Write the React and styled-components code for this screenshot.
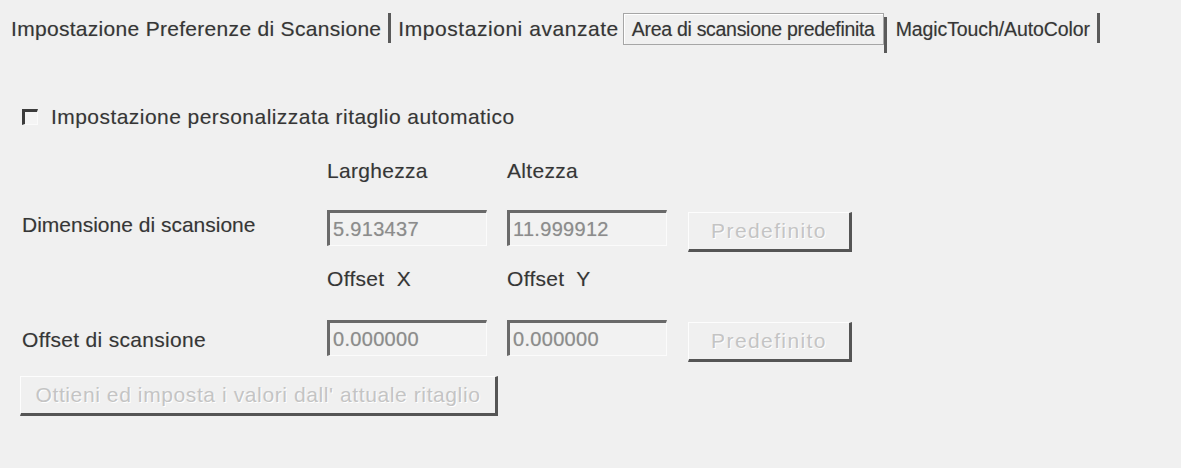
import React from "react";
import styled, { createGlobalStyle } from "styled-components";

const GlobalStyle = createGlobalStyle`
  html, body {
    margin: 0;
    padding: 0;
    background: #f0f0f0;
  }
  body {
    font-family: "Liberation Sans", Arial, sans-serif;
    font-size: 21px;
    letter-spacing: 0.3px;
    color: #363636;
  }
`;

const Page = styled.div`
  width: 1181px;
  height: 468px;
  box-sizing: border-box;
  padding: 13px 0 0 10px;
  background: #f0f0f0;
  overflow: hidden;
`;

const TabBar = styled.div`
  display: flex;
  align-items: center;
  height: 32px;
`;

const Tab = styled.div`
  height: 32px;
  display: flex;
  align-items: center;
  box-sizing: border-box;
  white-space: nowrap;
  font-size: ${p => p.size || 21}px;
  letter-spacing: ${p => (p.spacing !== undefined ? p.spacing : 0.3)}px;
  padding: ${p => (p.active ? "0 8px" : "0")};
  margin-left: ${p => (p.active ? "3px" : "0")};
  border: ${p => (p.active ? "1px solid #a6a6a6" : "1px solid transparent")};
  box-shadow: ${p => (p.active ? "inset 1px 1px 0 #fff" : "none")};
  color: #363636;
  text-shadow: 0 0 1px rgba(0, 0, 0, 0.25);
`;

const Separator = styled.div`
  width: 3px;
  height: ${p => (p.tall ? "36px" : "30px")};
  margin: ${p => (p.tight ? "4px 8px 0 0" : "0 6px")};
  background: #5a5a5a;
  align-self: flex-start;
`;

const Content = styled.div`
  padding-left: 12px;
  text-shadow: 0 0 1px rgba(0, 0, 0, 0.2);
`;

const CheckRow = styled.label`
  display: flex;
  align-items: center;
  height: 24px;
  margin-top: 60px;
  letter-spacing: 0.45px;
`;

const CheckBox = styled.span`
  width: 12px;
  height: 12px;
  margin-right: 13px;
  border-top: 3px solid #3c3c3c;
  border-left: 3px solid #3c3c3c;
  border-right: 1px solid #fafafa;
  border-bottom: 1px solid #fafafa;
  background: #f4f4f4;
`;

const FormRow = styled.div`
  display: grid;
  grid-template-columns: 305px 180px 181px 170px;
  align-items: ${p => (p.top ? "start" : "center")};
  margin-top: ${p => p.gap}px;
  height: ${p => p.height}px;
`;

const FieldLabel = styled.div`
  white-space: nowrap;
  margin-top: ${p => p.offset || 0}px;
  letter-spacing: ${p => (p.spacing !== undefined ? p.spacing : 0.3)}px;
`;

const Field = styled.div`
  width: 160px;
  height: 36px;
  box-sizing: border-box;
  border-top: 3px solid #6a6a6a;
  border-left: 3px solid #6a6a6a;
  border-right: 1px solid #fbfbfb;
  border-bottom: 1px solid #fbfbfb;
  padding: 5px 0 0 3px;
  font-size: 20px;
  letter-spacing: 0.3px;
  color: #8c8c8c;
  background: #f2f2f2;
`;

const Button = styled.div`
  width: ${p => p.width}px;
  height: 40px;
  box-sizing: border-box;
  margin-top: ${p => p.offset || 0}px;
  border-top: 1px solid #fdfdfd;
  border-left: 1px solid #fdfdfd;
  border-right: 3px solid #555;
  border-bottom: 3px solid #555;
  display: flex;
  align-items: center;
  justify-content: center;
  font-size: 21px;
  letter-spacing: ${p => p.spacing}px;
  color: #c4c4c4;
  text-shadow: 1px 1px 0 #ffffff;
  white-space: nowrap;
  background: #f0f0f0;
`;

const BigButtonRow = styled.div`
  margin: 14px 0 0 -2px;
`;

export default function App() {
  return (
    <>
      <GlobalStyle />
      <Page>
        <TabBar>
          <Tab>Impostazione Preferenze di Scansione</Tab>
          <Separator />
          <Tab spacing={0.55}>Impostazioni avanzate</Tab>
          <Tab active size={19.5} spacing={-0.3}>
            Area di scansione predefinita
          </Tab>
          <Separator tall tight />
          <Tab size={19.5} spacing={-0.1}>MagicTouch/AutoColor</Tab>
          <Separator />
        </TabBar>

        <Content>
          <CheckRow>
            <CheckBox />
            Impostazione personalizzata ritaglio automatico
          </CheckRow>

          <FormRow gap={30} height={24}>
            <span />
            <FieldLabel>Larghezza</FieldLabel>
            <FieldLabel>Altezza</FieldLabel>
          </FormRow>

          <FormRow gap={27} height={42} top>
            <FieldLabel offset={3} spacing={0}>Dimensione di scansione</FieldLabel>
            <Field>5.913437</Field>
            <Field>11.999912</Field>
            <Button width={164} offset={2} spacing={1.4}>Predefinito</Button>
          </FormRow>

          <FormRow gap={15} height={24}>
            <span />
            <FieldLabel>Offset&nbsp; X</FieldLabel>
            <FieldLabel>Offset&nbsp; Y</FieldLabel>
          </FormRow>

          <FormRow gap={29} height={42} top>
            <FieldLabel offset={8}>Offset di scansione</FieldLabel>
            <Field>0.000000</Field>
            <Field>0.000000</Field>
            <Button width={164} offset={2} spacing={1.4}>Predefinito</Button>
          </FormRow>

          <BigButtonRow>
            <Button width={478} spacing={0.6}>
              Ottieni ed imposta i valori dall' attuale ritaglio
            </Button>
          </BigButtonRow>
        </Content>
      </Page>
    </>
  );
}
